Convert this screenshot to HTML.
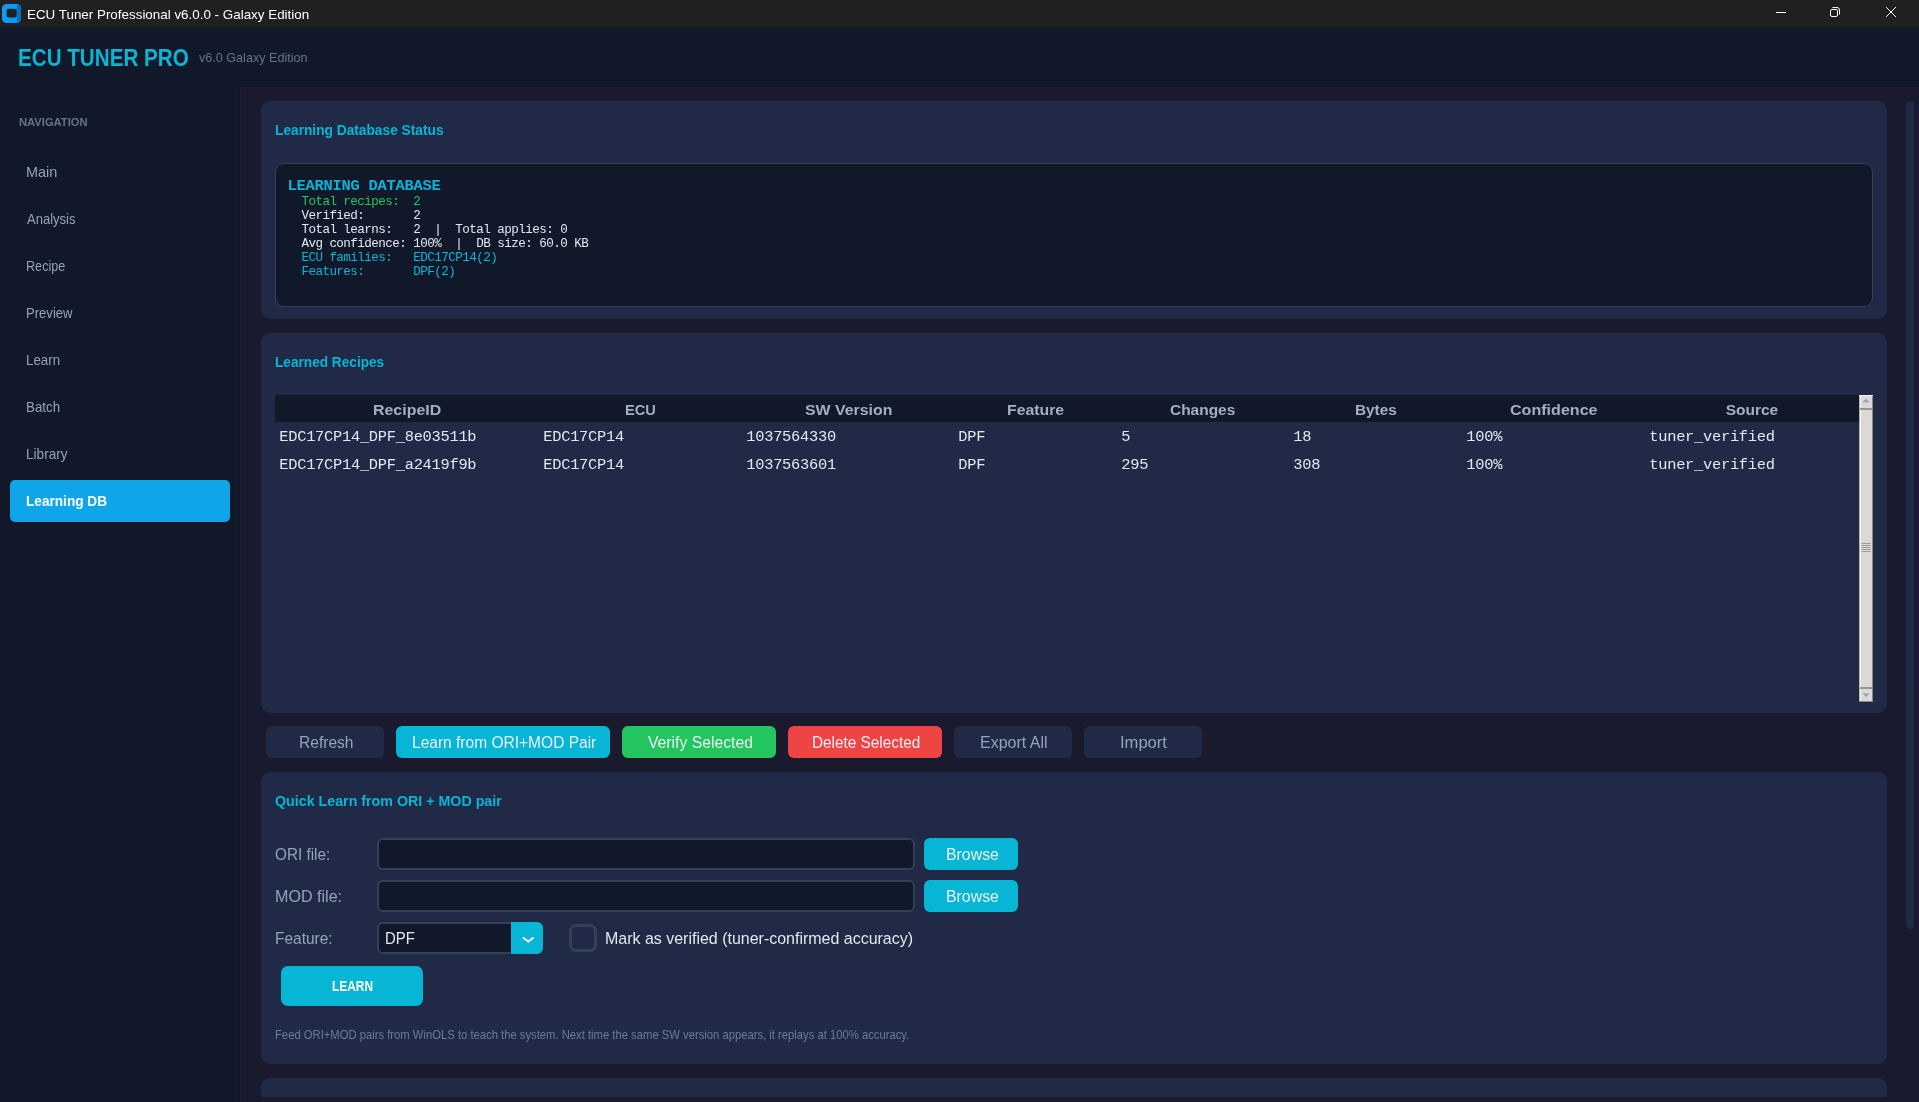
<!DOCTYPE html>
<html>
<head>
<meta charset="utf-8">
<title>ECU Tuner Professional v6.0.0 - Galaxy Edition</title>
<style>
*{box-sizing:border-box;margin:0;padding:0}
html,body{width:1919px;height:1102px;overflow:hidden;background:#1a1a2e}
body{position:relative;font-family:"Liberation Sans",sans-serif;color:#e2e8f0}
.abs{position:absolute}
.t{position:absolute;white-space:pre;line-height:1;transform-origin:0 50%}
.mono{font-family:"Liberation Mono",monospace}
.card{position:absolute;left:261px;width:1626px;background:#202a46;border-radius:9px}
.btn{position:absolute;top:726px;height:32px;border-radius:6px}
.entry{position:absolute;left:377px;width:538px;height:32px;background:#10182a;border:2px solid #334155;border-radius:6px}
.browse{position:absolute;left:924px;width:94px;height:32px;border-radius:6px;background:#06b6d4}
</style>
</head>
<body>
<!-- Title bar -->
<div class="abs" style="left:0;top:0;width:1919px;height:27px;background:#202020"></div>
<svg class="abs" style="left:2px;top:4px" width="19" height="19" viewBox="0 0 19 19">
  <defs><clipPath id="ic"><rect x="0" y="0" width="19" height="19" rx="4.5"/></clipPath></defs>
  <g clip-path="url(#ic)">
    <rect width="19" height="19" fill="#0b9bfb"/>
    <path d="M15 0 H19 V19 H15 Q14.4 9.5 15 0Z" fill="#0a6ec4"/>
  </g>
  <rect x="4.6" y="4.7" width="10.1" height="8.9" rx="1.8" fill="#202020"/>
</svg>
<svg class="abs" style="left:1770px;top:0" width="149" height="27" viewBox="0 0 149 27">
  <g stroke="#ffffff" stroke-width="1" fill="none">
    <path d="M6 12.5 H16"/>
    <rect x="60.5" y="9.5" width="7" height="7" rx="1.5"/>
    <path d="M62.5 7.5 H67 Q69.5 7.5 69.5 10 V14.5"/>
    <path d="M116 7 L126 17 M126 7 L116 17"/>
  </g>
</svg>

<!-- Header + sidebar -->
<div class="abs" style="left:0;top:27px;width:1919px;height:60px;background:#10182a"></div>
<div class="abs" style="left:0;top:87px;width:240px;height:1015px;background:#10182a"></div>
<div class="abs" style="left:10px;top:480px;width:220px;height:42px;border-radius:5px;background:#0ea5e9"></div>

<div class="abs" style="left:240px;top:87px;width:1679px;height:1px;background:#1f1b30"></div>
<div class="abs" style="left:240px;top:87px;width:1px;height:1015px;background:#1f1b30"></div>
<div class="abs" style="left:239px;top:87px;width:1px;height:1015px;background:#0e1729"></div>
<div class="abs" style="left:240px;top:86px;width:1679px;height:1px;background:#0e1729"></div>
<!-- Card 1 -->
<div class="card" style="top:101px;height:218px"></div>
<div class="abs" style="left:275px;top:163px;width:1598px;height:144px;background:#10182a;border:1px solid #334155;border-radius:9px"></div>

<!-- Card 2 -->
<div class="card" style="top:333px;height:380px"></div>
<div class="abs" style="left:275px;top:395px;width:1584px;height:27px;background:#10182a"></div>

<!-- Tk scrollbar -->
<div class="abs" style="left:1859px;top:395px;width:14px;height:307px;background:#dbd9d5"></div>
<div class="abs" style="left:1859px;top:395px;width:1px;height:307px;background:#b8b4ab"></div>
<div class="abs" style="left:1860px;top:395px;width:1px;height:307px;background:#f4f3f0"></div>
<div class="abs" style="left:1872px;top:395px;width:1px;height:307px;background:#8e887c"></div>
<div class="abs" style="left:1859px;top:395px;width:14px;height:1px;background:#f4f3f0"></div>
<div class="abs" style="left:1860px;top:408px;width:12px;height:2px;background:#9a958a"></div>
<div class="abs" style="left:1860px;top:687px;width:12px;height:2px;background:#9a958a"></div>
<div class="abs" style="left:1859px;top:701px;width:14px;height:1px;background:#8e887c"></div>
<svg class="abs" style="left:1859px;top:395px" width="14" height="307" viewBox="0 0 14 307">
  <path d="M3.3 7.6 L7 3.8 L10.7 7.6 Z" fill="#8fa3c4"/>
  <path d="M3.3 298.2 L7 302 L10.7 298.2 Z" fill="#8fa3c4"/>
  <g stroke="#9a958a" stroke-width="0.9"><path d="M2.5 148.5 H11.5 M2.5 150.5 H11.5 M2.5 152.5 H11.5 M2.5 154.5 H11.5 M2.5 156.5 H11.5"/></g>
</svg>

<!-- Buttons -->
<div class="btn" style="left:266px;width:118px;background:#202a46"></div>
<div class="btn" style="left:396px;width:214px;background:#06b6d4"></div>
<div class="btn" style="left:622px;width:154px;background:#22c55e"></div>
<div class="btn" style="left:788px;width:154px;background:#ef4444"></div>
<div class="btn" style="left:954px;width:118px;background:#202a46"></div>
<div class="btn" style="left:1084px;width:118px;background:#202a46"></div>

<!-- Card 3 -->
<div class="card" style="top:772px;height:292px"></div>
<div class="entry" style="top:838px"></div>
<div class="browse" style="top:838px"></div>
<div class="entry" style="top:880px"></div>
<div class="browse" style="top:880px"></div>
<div class="abs" style="left:377px;top:922px;width:166px;height:32px;background:#10182a;border:2px solid #334155;border-radius:6px"></div>
<div class="abs" style="left:511px;top:922px;width:32px;height:32px;background:#06b6d4;border-radius:0 6px 6px 0"></div>
<svg class="abs" style="left:520px;top:934px" width="16" height="12" viewBox="0 0 16 12"><path d="M3.5 4 L8.3 7.5 L13 4" stroke="#f2f6fa" stroke-width="2" fill="none" stroke-linecap="round" stroke-linejoin="round"/></svg>
<div class="abs" style="left:569px;top:924px;width:28px;height:28px;border:3px solid #334155;border-radius:7px"></div>
<div class="abs" style="left:281px;top:966px;width:142px;height:40px;border-radius:7px;background:#06b6d4"></div>

<!-- Card 4 (clipped) -->
<div class="abs" style="left:261px;top:1078px;width:1626px;height:19px;background:#202a46;border-radius:9px 9px 0 0"></div>

<!-- Right scrollbar -->
<div class="abs" style="left:1906px;top:101px;width:8px;height:828px;border-radius:4px;background:#202a46"></div>

<div id="txt" style="position:absolute;left:0;top:0;width:1919px;height:1102px;will-change:transform">
<div class="t" id="wtitle" style="left:27.40px;top:8.00px;font-size:13.60px;color:#ffffff;transform:scaleX(0.9853);">ECU Tuner Professional v6.0.0 - Galaxy Edition</div>
<div class="t" id="brand" style="left:18.36px;top:47.01px;font-size:23.00px;color:#06b6d4;font-weight:bold;transform:scaleX(0.8965);">ECU TUNER PRO</div>
<div class="t" id="ver" style="left:199.00px;top:51.00px;font-size:13.40px;color:#64748b;transform:scaleX(0.9408);">v6.0 Galaxy Edition</div>
<div class="t" id="navh" style="left:18.71px;top:117.01px;font-size:11.40px;color:#64748b;font-weight:bold;transform:scaleX(0.9818);">NAVIGATION</div>
<div class="t" id="nav0" style="left:25.70px;top:165.00px;font-size:14.80px;color:#94a3b8;transform:scaleX(0.9783);">Main</div>
<div class="t" id="nav1" style="left:26.55px;top:212.00px;font-size:14.80px;color:#94a3b8;transform:scaleX(0.8785);">Analysis</div>
<div class="t" id="nav2" style="left:25.55px;top:259.00px;font-size:14.80px;color:#94a3b8;transform:scaleX(0.8528);">Recipe</div>
<div class="t" id="nav3" style="left:25.55px;top:306.00px;font-size:14.80px;color:#94a3b8;transform:scaleX(0.8848);">Preview</div>
<div class="t" id="nav4" style="left:26.25px;top:353.00px;font-size:14.80px;color:#94a3b8;transform:scaleX(0.9003);">Learn</div>
<div class="t" id="nav5" style="left:26.25px;top:400.00px;font-size:14.80px;color:#94a3b8;transform:scaleX(0.9003);">Batch</div>
<div class="t" id="nav6" style="left:26.25px;top:447.00px;font-size:14.80px;color:#94a3b8;transform:scaleX(0.9184);">Library</div>
<div class="t" id="nav7" style="left:25.99px;top:494.00px;font-size:14.80px;color:#ffffff;font-weight:bold;transform:scaleX(0.9212);">Learning DB</div>
<div class="t" id="ct1" style="left:275.30px;top:123.02px;font-size:14.60px;color:#06b6d4;font-weight:bold;transform:scaleX(0.9402);">Learning Database Status</div>
<div class="t" id="ct2" style="left:275.30px;top:355.02px;font-size:14.60px;color:#06b6d4;font-weight:bold;transform:scaleX(0.9348);">Learned Recipes</div>
<div class="t" id="ct3" style="left:275.04px;top:794.02px;font-size:14.60px;color:#06b6d4;font-weight:bold;transform:scaleX(0.9761);">Quick Learn from ORI + MOD pair</div>
<div class="t" id="th0" style="left:373.00px;top:402.00px;font-size:15.50px;color:#a3afc2;font-weight:bold;transform:scaleX(1.0277);">RecipeID</div>
<div class="t" id="th1" style="left:625.30px;top:402.00px;font-size:15.50px;color:#a3afc2;font-weight:bold;transform:scaleX(0.9425);">ECU</div>
<div class="t" id="th2" style="left:805.12px;top:402.00px;font-size:15.50px;color:#a3afc2;font-weight:bold;transform:scaleX(1.0248);">SW Version</div>
<div class="t" id="th3" style="left:1006.96px;top:402.00px;font-size:15.50px;color:#a3afc2;font-weight:bold;transform:scaleX(1.0204);">Feature</div>
<div class="t" id="th4" style="left:1170.20px;top:402.00px;font-size:15.50px;color:#a3afc2;font-weight:bold;transform:scaleX(0.9976);">Changes</div>
<div class="t" id="th5" style="left:1354.90px;top:402.00px;font-size:15.50px;color:#a3afc2;font-weight:bold;transform:scaleX(0.9902);">Bytes</div>
<div class="t" id="th6" style="left:1510.09px;top:402.00px;font-size:15.50px;color:#a3afc2;font-weight:bold;transform:scaleX(1.0370);">Confidence</div>
<div class="t" id="th7" style="left:1725.69px;top:402.00px;font-size:15.50px;color:#a3afc2;font-weight:bold;">Source</div>
<div class="t" id="bt0" style="left:298.86px;top:734.00px;font-size:17.20px;color:#94a3b8;transform:scaleX(0.9060);">Refresh</div>
<div class="t" id="bt1" style="left:411.87px;top:734.00px;font-size:17.20px;color:#eaf1f6;transform:scaleX(0.9037);">Learn from ORI+MOD Pair</div>
<div class="t" id="bt2" style="left:647.70px;top:734.00px;font-size:17.20px;color:#eaf1f6;transform:scaleX(0.9153);">Verify Selected</div>
<div class="t" id="bt3" style="left:811.60px;top:734.00px;font-size:17.20px;color:#eaf1f6;transform:scaleX(0.8926);">Delete Selected</div>
<div class="t" id="bt4" style="left:979.60px;top:734.00px;font-size:17.20px;color:#94a3b8;transform:scaleX(0.9321);">Export All</div>
<div class="t" id="bt5" style="left:1120.25px;top:734.00px;font-size:17.20px;color:#94a3b8;transform:scaleX(0.9634);">Import</div>
<div class="t" id="l1" style="left:275.35px;top:846.00px;font-size:17.20px;color:#94a3b8;transform:scaleX(0.8888);">ORI file:</div>
<div class="t" id="l2" style="left:275.00px;top:888.00px;font-size:17.20px;color:#94a3b8;transform:scaleX(0.9362);">MOD file:</div>
<div class="t" id="l3" style="left:275.00px;top:930.00px;font-size:17.20px;color:#94a3b8;transform:scaleX(0.9011);">Feature:</div>
<div class="t" id="br1" style="left:946.20px;top:846.00px;font-size:17.20px;color:#eaf1f6;transform:scaleX(0.9236);">Browse</div>
<div class="t" id="br2" style="left:946.20px;top:888.00px;font-size:17.20px;color:#eaf1f6;transform:scaleX(0.9236);">Browse</div>
<div class="t" id="dpf" style="left:385.30px;top:930.00px;font-size:17.20px;color:#e2e8f0;transform:scaleX(0.8668);">DPF</div>
<div class="t" id="chk" style="left:604.86px;top:930.00px;font-size:17.20px;color:#e2e8f0;transform:scaleX(0.9293);">Mark as verified (tuner-confirmed accuracy)</div>
<div class="t" id="learn" style="left:332.29px;top:979.01px;font-size:14.00px;color:#ffffff;font-weight:bold;transform:scaleX(0.8498);">LEARN</div>
<div class="t" id="hint" style="left:275.00px;top:1030.00px;font-size:11.90px;color:#6b7b96;transform:scaleX(0.9463);">Feed ORI+MOD pairs from WinOLS to teach the system. Next time the same SW version appears, it replays at 100% accuracy.</div>
<div class="t mono" id="mh" style="left:287.60px;top:179.01px;font-size:15.40px;letter-spacing:-0.240px;color:#06b6d4;font-weight:bold;">LEARNING DATABASE</div>
<div class="t mono" id="ml0" style="left:287.40px;top:196.01px;font-size:12.60px;letter-spacing:-0.560px;color:#22c55e;">  Total recipes:  2</div>
<div class="t mono" id="ml1" style="left:287.40px;top:210.01px;font-size:12.60px;letter-spacing:-0.560px;color:#e2e8f0;">  Verified:       2</div>
<div class="t mono" id="ml2" style="left:287.40px;top:224.01px;font-size:12.60px;letter-spacing:-0.560px;color:#e2e8f0;">  Total learns:   2  |  Total applies: 0</div>
<div class="t mono" id="ml3" style="left:287.40px;top:238.01px;font-size:12.60px;letter-spacing:-0.560px;color:#e2e8f0;">  Avg confidence: 100%  |  DB size: 60.0 KB</div>
<div class="t mono" id="ml4" style="left:287.40px;top:252.01px;font-size:12.60px;letter-spacing:-0.560px;color:#06b6d4;">  ECU families:   EDC17CP14(2)</div>
<div class="t mono" id="ml5" style="left:287.40px;top:266.01px;font-size:12.60px;letter-spacing:-0.560px;color:#06b6d4;">  Features:       DPF(2)</div>
<div class="t mono" id="td0_0" style="left:279.30px;top:430.01px;font-size:15.40px;letter-spacing:-0.280px;color:#e2e8f0;">EDC17CP14_DPF_8e03511b</div>
<div class="t mono" id="td0_1" style="left:543.30px;top:430.01px;font-size:15.40px;letter-spacing:-0.280px;color:#e2e8f0;">EDC17CP14</div>
<div class="t mono" id="td0_2" style="left:746.30px;top:430.01px;font-size:15.40px;letter-spacing:-0.280px;color:#e2e8f0;">1037564330</div>
<div class="t mono" id="td0_3" style="left:958.30px;top:430.01px;font-size:15.40px;letter-spacing:-0.280px;color:#e2e8f0;">DPF</div>
<div class="t mono" id="td0_4" style="left:1121.30px;top:430.01px;font-size:15.40px;letter-spacing:-0.280px;color:#e2e8f0;">5</div>
<div class="t mono" id="td0_5" style="left:1293.30px;top:430.01px;font-size:15.40px;letter-spacing:-0.280px;color:#e2e8f0;">18</div>
<div class="t mono" id="td0_6" style="left:1466.30px;top:430.01px;font-size:15.40px;letter-spacing:-0.280px;color:#e2e8f0;">100%</div>
<div class="t mono" id="td0_7" style="left:1649.30px;top:430.01px;font-size:15.40px;letter-spacing:-0.280px;color:#e2e8f0;">tuner_verified</div>
<div class="t mono" id="td1_0" style="left:279.30px;top:458.01px;font-size:15.40px;letter-spacing:-0.280px;color:#e2e8f0;">EDC17CP14_DPF_a2419f9b</div>
<div class="t mono" id="td1_1" style="left:543.30px;top:458.01px;font-size:15.40px;letter-spacing:-0.280px;color:#e2e8f0;">EDC17CP14</div>
<div class="t mono" id="td1_2" style="left:746.30px;top:458.01px;font-size:15.40px;letter-spacing:-0.280px;color:#e2e8f0;">1037563601</div>
<div class="t mono" id="td1_3" style="left:958.30px;top:458.01px;font-size:15.40px;letter-spacing:-0.280px;color:#e2e8f0;">DPF</div>
<div class="t mono" id="td1_4" style="left:1121.30px;top:458.01px;font-size:15.40px;letter-spacing:-0.280px;color:#e2e8f0;">295</div>
<div class="t mono" id="td1_5" style="left:1293.30px;top:458.01px;font-size:15.40px;letter-spacing:-0.280px;color:#e2e8f0;">308</div>
<div class="t mono" id="td1_6" style="left:1466.30px;top:458.01px;font-size:15.40px;letter-spacing:-0.280px;color:#e2e8f0;">100%</div>
<div class="t mono" id="td1_7" style="left:1649.30px;top:458.01px;font-size:15.40px;letter-spacing:-0.280px;color:#e2e8f0;">tuner_verified</div>
</div>
</body>
</html>
